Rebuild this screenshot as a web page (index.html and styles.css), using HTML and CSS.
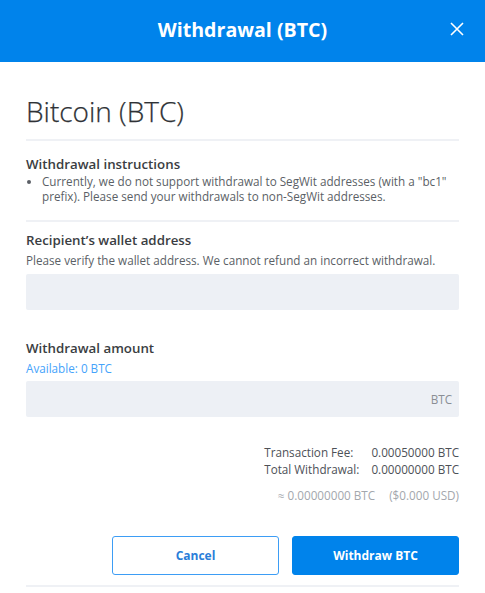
FILE: index.html
```html
<!DOCTYPE html>
<html>
<head>
<meta charset="utf-8">
<link rel="stylesheet" href="styles.css">
</head>
<body>
<div class="modal">
  <header class="modal-header">
    <h1 class="modal-title">Withdrawal (BTC)</h1>
    <button class="close-btn" aria-label="Close">
      <svg width="14" height="14" viewBox="0 0 14 14"><path d="M1 1L13 13M13 1L1 13" stroke="#fff" stroke-width="1.6" fill="none"/></svg>
    </button>
  </header>
  <div class="modal-body">
    <h2 class="coin-title">Bitcoin (BTC)</h2>
    <section class="section instructions">
      <h3 class="section-title">Withdrawal instructions</h3>
      <ul class="bullets">
        <li>Currently, we do not support withdrawal to SegWit addresses (with a "bc1" prefix). Please send your withdrawals to non-SegWit addresses.</li>
      </ul>
    </section>
    <section class="section address">
      <h3 class="section-title">Recipient’s wallet address</h3>
      <p class="helper">Please verify the wallet address. We cannot refund an incorrect withdrawal.</p>
      <div class="field"></div>
    </section>
    <section class="section amount">
      <h3 class="section-title">Withdrawal amount</h3>
      <p class="available">Available: 0 BTC</p>
      <div class="field field-unit"><span class="unit">BTC</span></div>
    </section>
    <div class="summary">
      <div class="summary-grid">
        <span>Transaction Fee:</span><span>0.00050000 BTC</span>
        <span>Total Withdrawal:</span><span>0.00000000 BTC</span>
      </div>
      <div class="approx"><span>≈ 0.00000000 BTC</span><span>($0.000 USD)</span></div>
    </div>
    <div class="actions">
      <button class="btn btn-outline">Cancel</button>
      <button class="btn btn-primary">Withdraw BTC</button>
    </div>
  </div>
</div>
</body>
</html>
```
FILE: styles.css
```css
* { box-sizing: border-box; }
html, body { margin: 0; padding: 0; background: #fff; }
body { font-family: "Open Sans", "Noto Sans", sans-serif; color: #3a3d42; }
.modal { width: 485px; }
.modal-header {
  height: 62px;
  background: #0083eb;
  display: flex;
  align-items: center;
  justify-content: center;
  position: relative;
}
.modal-title {
  margin: 0;
  color: #fff;
  font-size: 19.6px;
  font-weight: 700;
  line-height: 26px;
  padding-bottom: 2px;
}
.close-btn {
  position: absolute;
  right: 21px;
  top: 22px;
  background: none;
  border: 0;
  padding: 0;
  width: 14px;
  height: 14px;
  display: flex;
}
.modal-body { padding: 0 26px; }
.coin-title {
  margin: 0;
  padding: 29px 0 8px;
  font-size: 28px;
  font-weight: 300;
  line-height: 40px;
  color: #2f3236;
  border-bottom: 2px solid #eff1f5;
  -webkit-text-stroke: 0.25px #2f3236;
}
.section-title {
  margin: 0;
  font-size: 13.3px;
  font-weight: 600;
  line-height: 20px;
  color: #3a3d42;
}
.instructions {
  padding: 13px 0 16px;
  border-bottom: 2px solid #eff1f5;
}
.bullets {
  margin: 0;
  padding: 0 0 0 16px;
  font-size: 11.7px;
  line-height: 15px;
  color: #5b5f66;
}
.address { padding-top: 8px; }
.helper {
  margin: 2px 0 5px;
  font-size: 11.7px;
  line-height: 17px;
  color: #5b5f66;
}
.field {
  height: 36px;
  background: #edf0f5;
  border-radius: 2px;
}
.amount { padding-top: 28px; }
.available {
  margin: 2px 0 5px;
  font-size: 11.7px;
  line-height: 16px;
  color: #45a3fb;
}
.field-unit {
  display: flex;
  align-items: center;
  justify-content: flex-end;
  padding-right: 7px;
}
.unit { font-size: 11.7px; color: #8a8e94; }
.summary {
  margin-top: 27px;
  display: flex;
  flex-direction: column;
  align-items: flex-end;
}
.summary-grid {
  display: grid;
  grid-template-columns: auto auto;
  column-gap: 12px;
  font-size: 11.7px;
  line-height: 17px;
  color: #4d5157;
}
.approx {
  margin-top: 9px;
  display: flex;
  gap: 14px;
  font-size: 11.7px;
  line-height: 17px;
  color: #a3a7ad;
}
.actions {
  margin-top: 32px;
  padding-bottom: 10px;
  display: flex;
  justify-content: flex-end;
  gap: 13px;
  border-bottom: 2px solid #eff1f5;
}
.btn {
  width: 167px;
  height: 39px;
  border-radius: 3px;
  font-family: inherit;
  font-size: 12px;
  font-weight: 700;
}
.btn-outline {
  background: #fff;
  border: 1px solid #3d9df5;
  color: #2a7ed9;
}
.btn-primary {
  background: #0083eb;
  border: 1px solid #0083eb;
  color: #fff;
}
```
